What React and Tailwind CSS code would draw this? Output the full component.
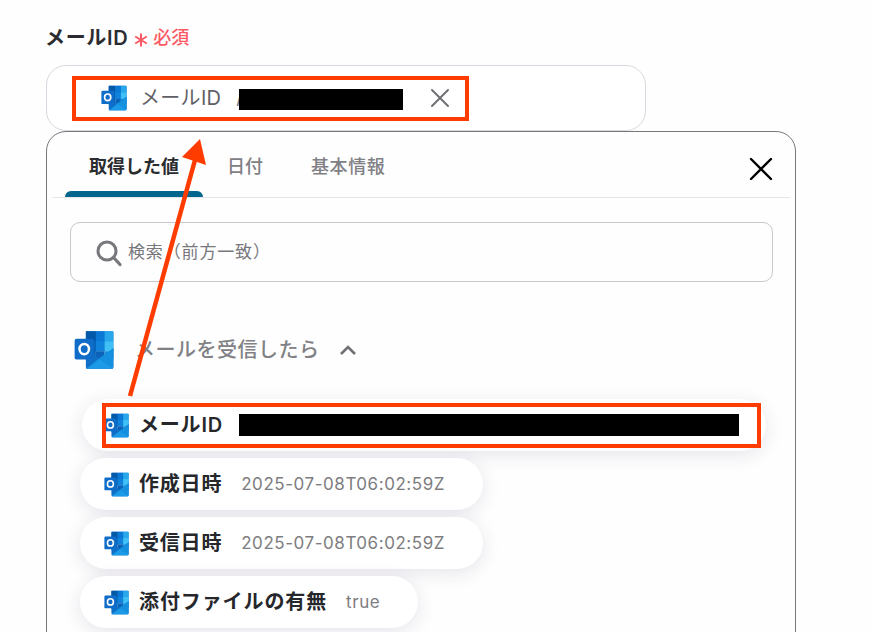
const FONT = 'Inter, "Noto Sans CJK JP", "Noto Sans", sans-serif';

function Outlook({ size = 24, className = "" }) {
  return (
    <svg width={size} height={size} viewBox="0 0 32 32" className={className}>
      <path d="M10.5 1 H30.5 a1 1 0 0 1 1 1 V17 H9.5 V2 a1 1 0 0 1 1 -1 Z" fill="#0A78D4" />
      <rect x="9.5" y="1" width="8" height="8" fill="#0358A7" />
      <rect x="17.5" y="1" width="7" height="8" fill="#0A78D4" />
      <path d="M24.5 1 H30.5 a1 1 0 0 1 1 1 V9 H24.5 Z" fill="#28A8EA" />
      <rect x="9.5" y="9" width="8" height="15" fill="#0364B8" />
      <rect x="17.5" y="9" width="7" height="8" fill="#1082DB" />
      <rect x="24.5" y="9" width="7" height="8" fill="#40C0F5" />
      <rect x="17.5" y="17" width="7" height="6" fill="#0A63B8" />
      <rect x="24.5" y="17" width="7" height="6" fill="#1490DF" />
      <path d="M9.5 16 V29.5 a1.5 1.5 0 0 0 1.5 1.5 H30 a1.5 1.5 0 0 0 1.5 -1.5 V14.5 L20.5 23 Z" fill="#0F6FC6" />
      <path d="M9.5 31 L21 22 L31.5 14.5 V29.5 a1.5 1.5 0 0 1 -1.5 1.5 Z" fill="#1490DF" />
      <path d="M11 31 L20.5 23.5 L31.2 30.5 L30 31 Z" fill="#1C9AE8" />
      <rect x="0.5" y="7" width="15.5" height="16.5" rx="1.5" fill="#0F6CC9" />
      <ellipse cx="8.2" cy="15.2" rx="3.8" ry="4.1" fill="none" stroke="#fff" strokeWidth="2" />
    </svg>
  );
}

function Pill({ label, value, width, first = false, track = "tracking-[0.8px]" }) {
  return (
    <div
      className={
        first
          ? "ml-[2px] flex h-[52px] shrink-0 items-center rounded-[26px] bg-white pl-[22px] shadow-[0_4px_18px_rgba(60,50,90,0.13)]"
          : "flex h-[52px] shrink-0 items-center rounded-[26px] bg-white pl-6 shadow-[0_4px_18px_rgba(60,50,90,0.13)]"
      }
      style={{ width }}
    >
      <Outlook size={25} className="mr-[10px]" />
      <span className={"text-[20px] font-semibold leading-none text-[#25272b] " + track}>{label}</span>
      {value && <span className="ml-[19px] text-[17px] leading-none tracking-[0.55px] text-[#7d7d80]">{value}</span>}
    </div>
  );
}

export default function App() {
  return (
    <div className="relative h-[632px] w-[872px] overflow-hidden bg-[#fefefe]" style={{ fontFamily: FONT }}>
      <div className="flex flex-col pl-[46px] pt-[24px]">
        <div className="flex h-[28px] items-center">
          <span className="-ml-[1px] text-[20px] font-semibold tracking-[0.65px] text-[#2b2c30]">メールID</span>
          <svg width="14" height="14" viewBox="0 0 14 14" className="ml-[6px] mt-[4px]">
            <path d="M7 0.5 V13.5 M1.2 3.5 L12.8 10.5 M12.8 3.5 L1.2 10.5" stroke="#fb5a64" strokeWidth="2" />
          </svg>
          <span className="ml-[5px] text-[18px] font-medium leading-none text-[#fb5a64]">必須</span>
        </div>

        <div className="mt-[13px] flex h-[66px] w-[600px] items-center rounded-[20px] border border-[#d8d8e0] bg-white pl-[54px]">
          <Outlook size={26} />
          <span className="ml-[13px] text-[20px] tracking-[0.3px] text-[#5f6066]">メールID</span>
          <span className="ml-[15px] text-[19px] text-[#77777c]">/</span>
          <svg width="20" height="20" viewBox="0 0 20 20" className="ml-[187px]">
            <path d="M2 2 L18 18 M18 2 L2 18" stroke="#6f7075" strokeWidth="2" strokeLinecap="round" />
          </svg>
        </div>

        <div className="flex h-[540px] w-[750px] flex-col rounded-[20px] border border-[#77777c] bg-[#fefefe] px-[5px]">
          <div className="relative flex h-[66px] shrink-0 items-center border-b border-[#e6e6ea] pl-[37px]">
            <span className="mt-[3px] text-[18px] font-semibold text-[#2b2c30]">取得した値</span>
            <span className="ml-[48px] mt-[3px] text-[18px] font-medium text-[#808085]">日付</span>
            <span className="ml-[48px] mt-[3px] text-[18px] font-medium tracking-[0.6px] text-[#808085]">基本情報</span>
            <div className="absolute bottom-0 left-[13px] h-[6px] w-[138px] rounded-t-[6px] bg-[#04668c]" />
            <svg width="24" height="24" viewBox="0 0 24 24" className="absolute right-[17px] top-[25px]">
              <path d="M2 2 L22 22 M22 2 L2 22" stroke="#000" strokeWidth="2.4" strokeLinecap="round" />
            </svg>
          </div>

          <div className="ml-[18px] mt-[24px] flex h-[60px] w-[703px] shrink-0 items-center rounded-[10px] border border-[#c9c9cd] pl-[24px]">
            <svg width="28" height="28" viewBox="0 0 28 28" className="mt-[1px]">
              <circle cx="12" cy="12" r="9" fill="none" stroke="#77777c" strokeWidth="3" />
              <path d="M19 19 L25 25.5" stroke="#77777c" strokeWidth="3.2" strokeLinecap="round" />
            </svg>
            <span className="ml-[5px] mt-[2px] text-[17px] tracking-[0.85px] text-[#77777c]">検索（前方一致）</span>
          </div>

          <div className="mt-[48px] flex h-[40px] shrink-0 items-center pl-[22px]">
            <Outlook size={40} />
            <span className="ml-[21px] text-[20px] font-medium tracking-[0.5px] text-[#808085]">メールを受信したら</span>
            <svg width="20" height="12" viewBox="0 0 20 12" className="ml-[18px]">
              <path d="M3 10 L10 3 L17 10" fill="none" stroke="#6f7075" strokeWidth="2.6" />
            </svg>
          </div>

          <div className="ml-[28px] mt-[29px] flex flex-col gap-[7px]">
            <Pill label="メールID" value="" width={684} first />
            <Pill label="作成日時" value="2025-07-08T06:02:59Z" width={403} />
            <Pill label="受信日時" value="2025-07-08T06:02:59Z" width={403} />
            <Pill label="添付ファイルの有無" value="true" width={338} track="tracking-[0.9px]" />
          </div>
        </div>
      </div>

      {/* Annotation overlay */}
      <div className="absolute left-[72px] top-[76px] h-[45px] w-[397px] border-[4px] border-[#ff3c00]" />
      <div className="absolute left-[239px] top-[89px] h-[21px] w-[164px] bg-black" />
      <div className="absolute left-[102px] top-[403px] h-[45px] w-[659px] border-[4px] border-[#ff3c00]" />
      <div className="absolute left-[239px] top-[414px] h-[22px] w-[500px] bg-black" />
      <svg width="872" height="632" className="pointer-events-none absolute left-0 top-0">
        <path d="M130 396 L195 160" stroke="#ff3c00" strokeWidth="4.5" fill="none" />
        <path d="M200 139 L182 157 L206 165 Z" fill="#ff3c00" />
      </svg>
    </div>
  );
}
